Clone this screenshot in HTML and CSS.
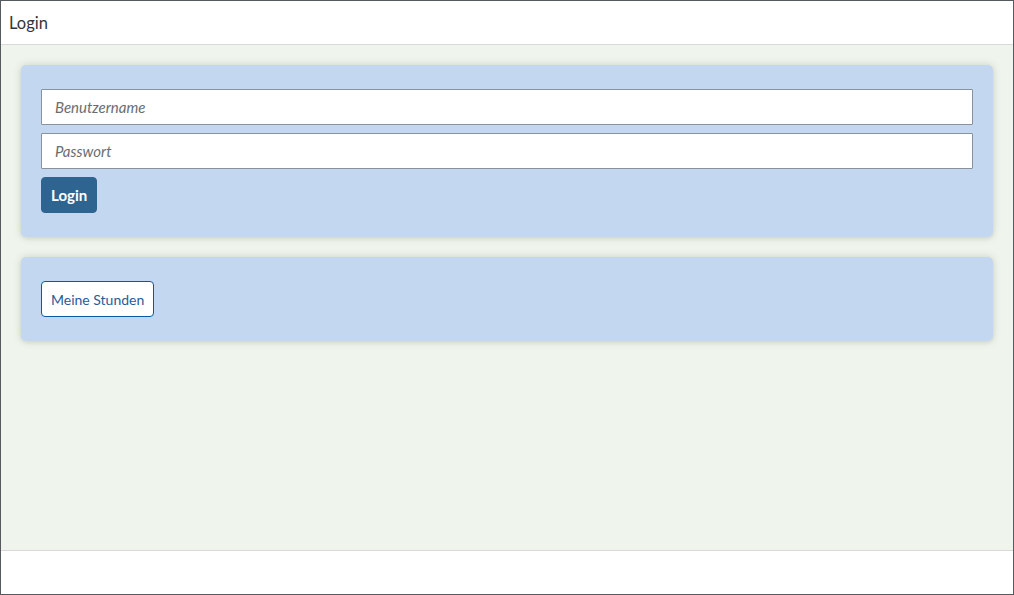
FILE: index.html
```html
<!DOCTYPE html>
<html lang="de">
<head>
<meta charset="utf-8">
<title>Login</title>
<link rel="stylesheet" href="styles.css">
</head>
<body>
<div class="app">
  <header class="bar">
    <span class="title">Login</span>
  </header>
  <main class="content">
    <section class="card">
      <input class="field" type="text" placeholder="Benutzername">
      <input class="field" type="password" placeholder="Passwort">
      <div><button class="btn btn-primary">Login</button></div>
    </section>
    <section class="card">
      <div><button class="btn btn-outline">Meine Stunden</button></div>
    </section>
  </main>
  <footer class="footer"></footer>
</div>
</body>
</html>
```

FILE: styles.css
```css
* { box-sizing: border-box; }
html, body { margin: 0; padding: 0; height: 100%; }
body {
  font-family: "Lato", "Noto Sans", "Liberation Sans", sans-serif;
  color: #32363a;
}
.app {
  height: 595px;
  border: 1px solid #555a5f;
  display: flex;
  flex-direction: column;
  background: #ffffff;
}
.bar {
  height: 44px;
  flex: 0 0 44px;
  border-bottom: 1px solid #d9d9d9;
  display: flex;
  align-items: center;
  padding-left: 8px;
  background: #ffffff;
}
.title {
  font-size: 16.5px;
  color: #32363a;
}
.content {
  flex: 1;
  background: #eff5ed;
  padding: 20px 20px;
  display: flex;
  flex-direction: column;
  gap: 20px;
}
.card {
  background: #c3d7f1;
  border-radius: 5px;
  box-shadow: 0 0 8px rgba(0, 0, 0, 0.15), 0 2px 4px rgba(0,0,0,0.05);
  padding: 24px 20px;
  display: flex;
  flex-direction: column;
  gap: 8px;
}
.field {
  height: 36px;
  width: 100%;
  border: 1px solid #89919a;
  border-radius: 1px;
  background: #ffffff;
  padding: 0 13px 1px;
  font-family: inherit;
  font-size: 15px;
  color: #32363a;
  outline: none;
}
.field::placeholder {
  color: #6a6d70;
  font-style: italic;
}
.btn {
  height: 36px;
  padding: 0 9px;
  border-radius: 4px;
  font-family: inherit;
  font-size: 14px;
  cursor: pointer;
}
.btn-primary {
  background: #2e6590;
  border: 1px solid #2e6590;
  color: #ffffff;
  font-weight: 700;
  font-size: 15px;
  padding: 0 9px 1px;
}
.btn-outline {
  background: #ffffff;
  border: 1px solid #0a58a8;
  color: #2a5a96;
  font-weight: 400;
}
.footer {
  height: 44px;
  flex: 0 0 44px;
  border-top: 1px solid #d9d9d9;
  background: #ffffff;
}
```
